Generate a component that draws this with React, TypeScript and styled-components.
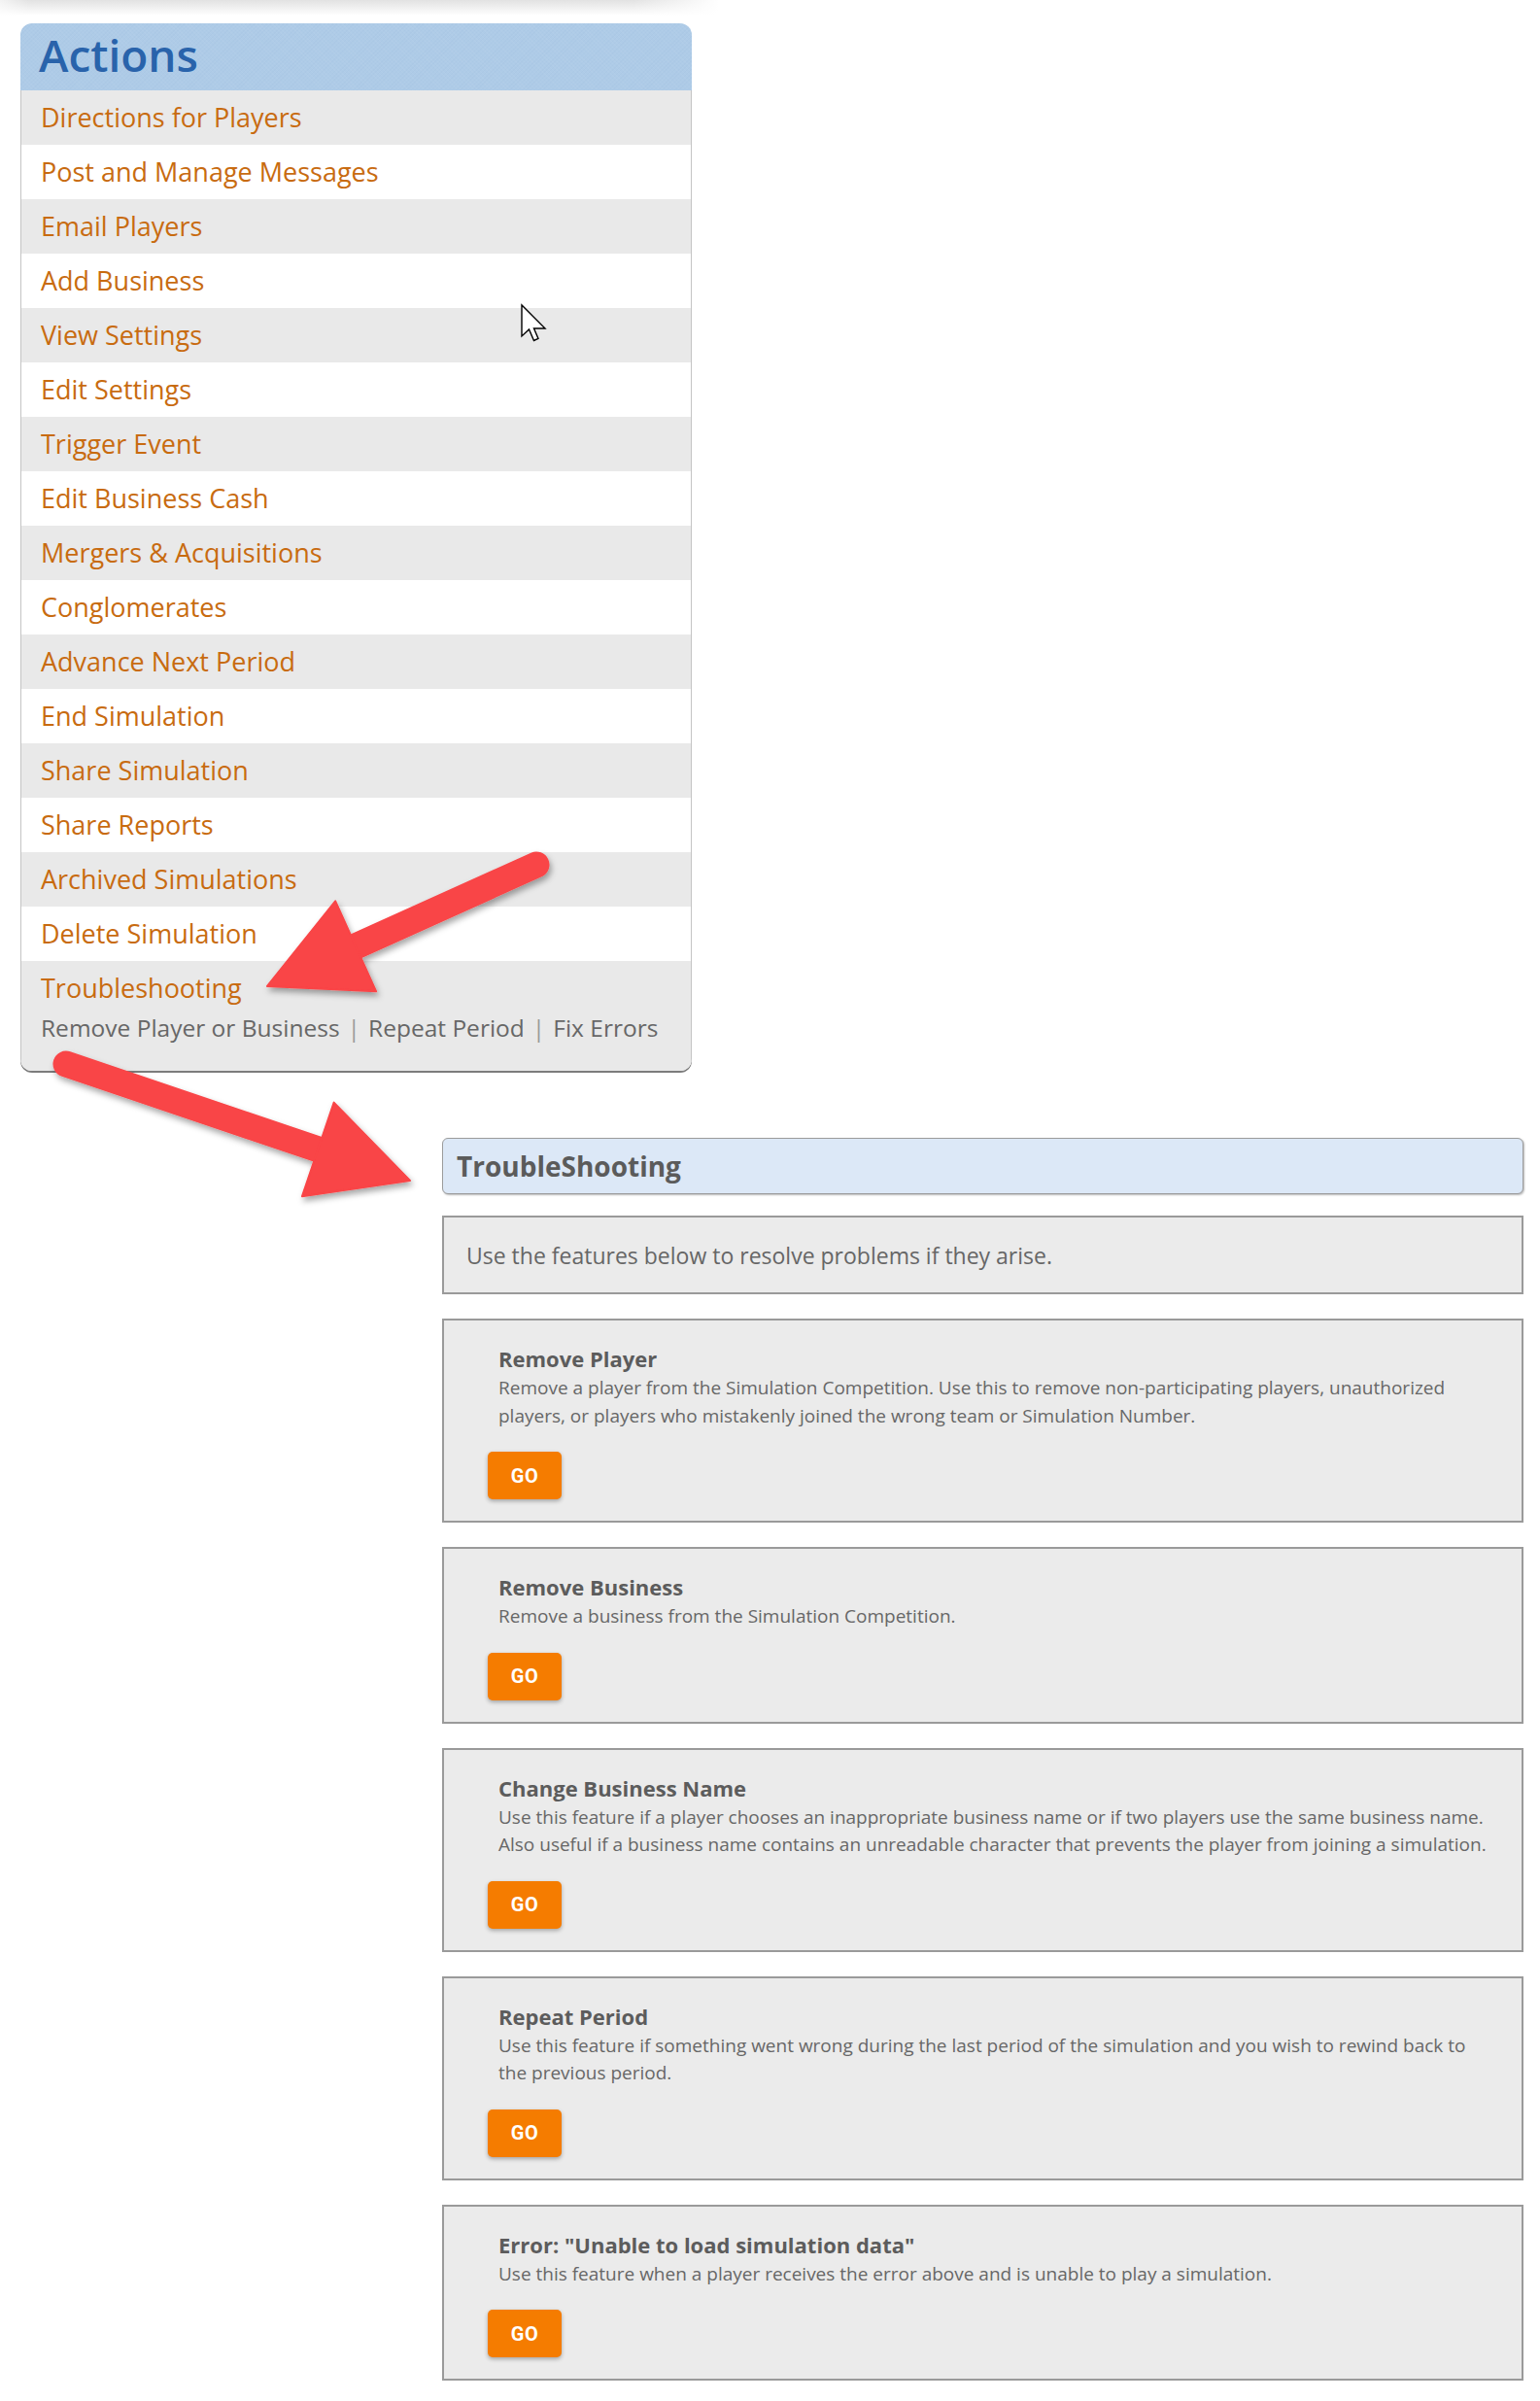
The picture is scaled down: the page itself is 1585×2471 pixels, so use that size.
import React from 'react';
import styled, { createGlobalStyle } from 'styled-components';

const GlobalStyle = createGlobalStyle`
  html, body {
    margin: 0;
    padding: 0;
    background: #fff;
  }
  body {
    font-family: 'Open Sans', 'Liberation Sans', sans-serif;
  }
`;

const Page = styled.div`
  position: relative;
  width: 1585px;
  min-height: 2471px;
  display: flex;
  flex-direction: column;
`;

const TopShade = styled.div`
  width: 740px;
  height: 16px;
  margin-bottom: 8px;
  background:
    linear-gradient(to right, rgba(255, 255, 255, 0.6), rgba(255, 255, 255, 0) 4%, rgba(255, 255, 255, 0) 88%, #fff),
    linear-gradient(to bottom, #e2e2e2, #fff);
`;

/* ---------- Actions panel ---------- */

const ActionsPanel = styled.nav`
  margin-left: 21px;
  width: 691px;
  border-radius: 12px;
  overflow: hidden;
  box-shadow: 0 2px 0 #7c7c7c;
`;

const ActionsHeader = styled.h2`
  margin: 0;
  height: 69px;
  box-sizing: border-box;
  padding: 0 0 5px 19px;
  line-height: 64px;
  font-size: 46px;
  font-weight: 600;
  color: #2963ab;
  background-color: #aecbe7;
  background-image:
    repeating-linear-gradient(45deg, rgba(255, 255, 255, 0.035) 0 1px, transparent 1px 3px),
    repeating-linear-gradient(-45deg, rgba(80, 120, 170, 0.03) 0 1px, transparent 1px 3px);
`;

const ActionList = styled.div`
  border-left: 1px solid #c4c4c4;
  border-right: 1px solid #c4c4c4;
  border-radius: 0 0 12px 12px;
  background: #e9e9e9;
`;

const ActionRow = styled.a<{ $shaded: boolean }>`
  display: block;
  height: 56px;
  line-height: 56px;
  padding-left: 20px;
  background: ${({ $shaded }) => ($shaded ? '#e9e9e9' : '#fff')};
  color: #c86b10;
  font-size: 27px;
  text-decoration: none;
  white-space: nowrap;
`;

const TroubleRow = styled.div`
  padding: 2px 0 29px 20px;
  background: #e9e9e9;
`;

const TroubleLink = styled.a`
  display: block;
  line-height: 52px;
  color: #c86b10;
  font-size: 27px;
  text-decoration: none;
`;

const SubLinks = styled.div`
  line-height: 30px;
  font-size: 24.5px;
  color: #676767;
  white-space: nowrap;
`;

const SubLink = styled.span`
  color: #676767;
`;

const Pipe = styled.span`
  color: #9a9a9a;
  margin: 0 8px;
`;

/* ---------- Troubleshooting page ---------- */

const TroubleSection = styled.section`
  margin: 69px 0 0 455px;
  width: 1113px;
  display: flex;
  flex-direction: column;
  gap: 25px;
`;

const SectionHeader = styled.h1`
  margin: 0 0 -3px;
  height: 58px;
  box-sizing: border-box;
  padding-left: 14px;
  line-height: 56px;
  font-size: 28px;
  font-weight: 700;
  color: #5b5b5b;
  background: #dce8f7;
  border: 1px solid #9c9c9c;
  border-radius: 6px;
  box-shadow: 1px 1px 2px rgba(0, 0, 0, 0.28);
`;

const Intro = styled.div`
  height: 81px;
  box-sizing: border-box;
  padding-left: 23px;
  display: flex;
  align-items: center;
  font-size: 23px;
  color: #666;
  background: #ebebeb;
  border: 2px solid #9a9a9a;
`;

const Card = styled.article`
  padding: 23px 10px 22px 45px;
  background: #ebebeb;
  border: 2px solid #9a9a9a;
`;

const CardTitle = styled.h3`
  margin: 0 0 0 11px;
  line-height: 32px;
  font-size: 22px;
  font-weight: 700;
  color: #5c5c5c;
`;

const CardText = styled.p`
  margin: 0 0 23px 11px;
  line-height: 28.5px;
  font-size: 19px;
  color: #676767;
`;

const GoButton = styled.button`
  display: block;
  width: 76px;
  height: 49px;
  padding: 0;
  border: none;
  border-radius: 5px;
  background: #f57c00;
  color: #fff;
  font-family: Roboto, 'Liberation Sans', sans-serif;
  font-size: 20px;
  font-weight: 700;
  letter-spacing: 0.5px;
  box-shadow: 0 2px 4px rgba(0, 0, 0, 0.3);
`;

/* ---------- overlay drawings ---------- */

const Overlay = styled.svg`
  position: absolute;
  left: 0;
  top: 0;
  pointer-events: none;
`;

const actions = [
  'Directions for Players',
  'Post and Manage Messages',
  'Email Players',
  'Add Business',
  'View Settings',
  'Edit Settings',
  'Trigger Event',
  'Edit Business Cash',
  'Mergers & Acquisitions',
  'Conglomerates',
  'Advance Next Period',
  'End Simulation',
  'Share Simulation',
  'Share Reports',
  'Archived Simulations',
  'Delete Simulation',
];

const tools: { title: string; lines: string[] }[] = [
  {
    title: 'Remove Player',
    lines: [
      'Remove a player from the Simulation Competition. Use this to remove non-participating players, unauthorized',
      'players, or players who mistakenly joined the wrong team or Simulation Number.',
    ],
  },
  {
    title: 'Remove Business',
    lines: ['Remove a business from the Simulation Competition.'],
  },
  {
    title: 'Change Business Name',
    lines: [
      'Use this feature if a player chooses an inappropriate business name or if two players use the same business name.',
      'Also useful if a business name contains an unreadable character that prevents the player from joining a simulation.',
    ],
  },
  {
    title: 'Repeat Period',
    lines: [
      'Use this feature if something went wrong during the last period of the simulation and you wish to rewind back to',
      'the previous period.',
    ],
  },
  {
    title: 'Error: "Unable to load simulation data"',
    lines: ['Use this feature when a player receives the error above and is unable to play a simulation.'],
  },
];

type Pt = [number, number];

const Arrow = ({ tail, tip }: { tail: Pt; tip: Pt }) => {
  const dx = tip[0] - tail[0];
  const dy = tip[1] - tail[1];
  const len = Math.hypot(dx, dy);
  const ux = dx / len;
  const uy = dy / len;
  const headLen = 100;
  const half = 51;
  const bx = tip[0] - ux * headLen;
  const by = tip[1] - uy * headLen;
  const b1: Pt = [bx - uy * half, by + ux * half];
  const b2: Pt = [bx + uy * half, by - ux * half];
  return (
    <g filter="url(#arrowShadow)">
      <line
        x1={tail[0]}
        y1={tail[1]}
        x2={bx + ux * 6}
        y2={by + uy * 6}
        stroke="#f94446"
        strokeWidth={27}
        strokeLinecap="round"
      />
      <polygon
        points={`${tip[0]},${tip[1]} ${b1[0]},${b1[1]} ${b2[0]},${b2[1]}`}
        fill="#f94446"
        strokeLinejoin="round"
        stroke="#f94446"
        strokeWidth={2}
      />
    </g>
  );
};

const Cursor = ({ x, y }: { x: number; y: number }) => (
  <path
    transform={`translate(${x} ${y})`}
    d="M0 0 L0 32 L7.5 25 L12.5 36.5 L17 34.5 L12.5 24 L24 24 Z"
    fill="#fff"
    stroke="#000"
    strokeWidth={1.4}
    strokeLinejoin="miter"
  />
);

export default function App() {
  return (
    <>
      <GlobalStyle />
      <Page>
        <TopShade />
        <ActionsPanel>
          <ActionsHeader>Actions</ActionsHeader>
          <ActionList>
            {actions.map((label, i) => (
              <ActionRow key={label} href="#" $shaded={i % 2 === 0}>
                {label}
              </ActionRow>
            ))}
            <TroubleRow>
              <TroubleLink href="#">Troubleshooting</TroubleLink>
              <SubLinks>
                <SubLink>Remove Player or Business</SubLink>
                <Pipe>|</Pipe>
                <SubLink>Repeat Period</SubLink>
                <Pipe>|</Pipe>
                <SubLink>Fix Errors</SubLink>
              </SubLinks>
            </TroubleRow>
          </ActionList>
        </ActionsPanel>

        <TroubleSection>
          <SectionHeader>TroubleShooting</SectionHeader>
          <Intro>Use the features below to resolve problems if they arise.</Intro>
          {tools.map((tool) => (
            <Card key={tool.title}>
              <CardTitle>{tool.title}</CardTitle>
              <CardText>
                {tool.lines.map((line, i) => (
                  <React.Fragment key={i}>
                    {i > 0 && <br />}
                    {line}
                  </React.Fragment>
                ))}
              </CardText>
              <GoButton>GO</GoButton>
            </Card>
          ))}
        </TroubleSection>

        <Overlay width={1585} height={2471} viewBox="0 0 1585 2471">
          <defs>
            <filter id="arrowShadow" x="-20%" y="-20%" width="140%" height="140%">
              <feDropShadow dx="2" dy="4" stdDeviation="3" floodColor="#000" floodOpacity="0.35" />
            </filter>
          </defs>
          <Arrow tail={[552, 890]} tip={[275, 1015]} />
          <Arrow tail={[68, 1095]} tip={[422, 1215]} />
          <Cursor x={537} y={314} />
        </Overlay>
      </Page>
    </>
  );
}
